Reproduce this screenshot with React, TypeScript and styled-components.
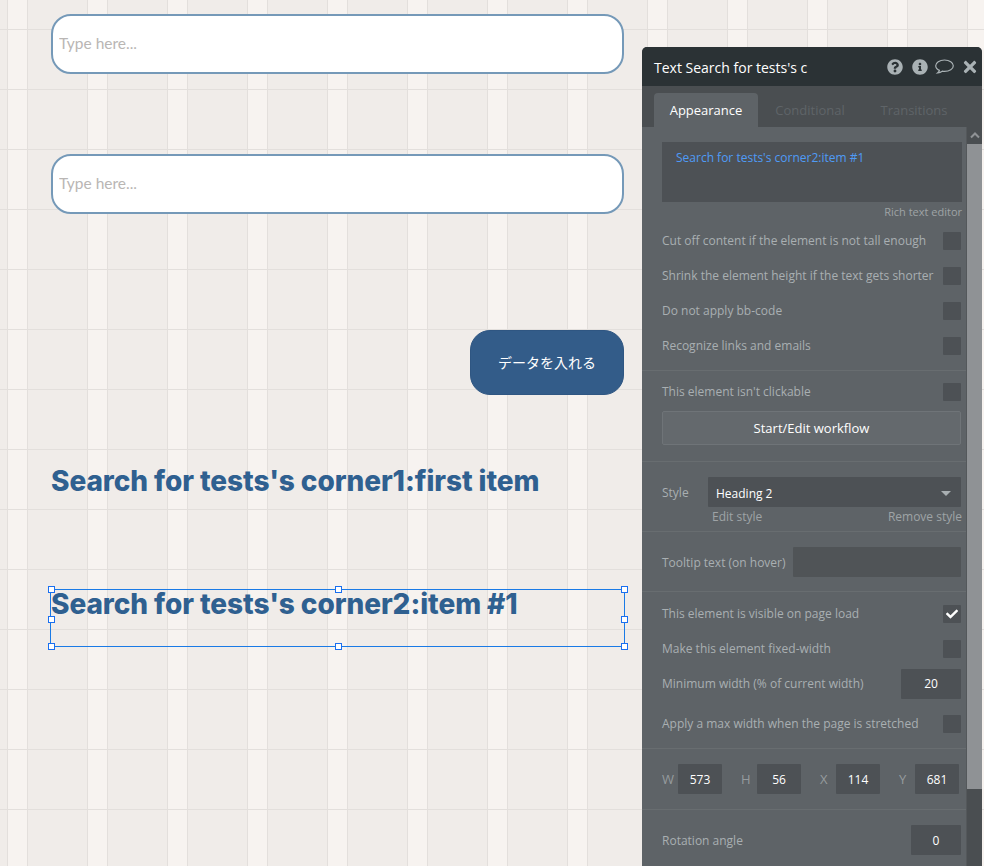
import React from "react";
import styled, { createGlobalStyle } from "styled-components";
import { FaCheck, FaInfoCircle, FaQuestionCircle, FaTimes } from "react-icons/fa";

const GlobalStyle = createGlobalStyle`
  html, body {
    margin: 0;
    padding: 0;
    height: 100%;
    overflow: hidden;
  }
  * {
    box-sizing: border-box;
  }
`;

const Canvas = styled.div`
  position: relative;
  width: 100%;
  height: 100vh;
  overflow: hidden;
  background-color: #f0ecE9;
  background-image: linear-gradient(to bottom, #e3dfdc 1px, transparent 1px),
    linear-gradient(
      to right,
      #e3dfdc 1px,
      #f7f3f0 1px,
      #f7f3f0 20px,
      #e3dfdc 20px,
      #e3dfdc 21px,
      transparent 21px
    );
  background-size: 100% 60px, 80px 100%;
  background-position: 0 29px, 7px 0;
`;

const Page = styled.div`
  display: flex;
  flex-direction: column;
  width: 573px;
  margin-left: 51px;
  padding-top: 14px;
`;

const SearchInput = styled.input<{ $top: number }>`
  width: 100%;
  height: 60px;
  margin-top: ${(p) => p.$top}px;
  padding: 0 8px 3px 6px;
  border: 2px solid #7599b8;
  border-radius: 20px;
  background: #fff;
  font-family: Lato, sans-serif;
  font-size: 15.5px;
  &::placeholder {
    color: #b9b6b4;
    opacity: 1;
  }
`;

const SubmitButton = styled.button`
  align-self: flex-end;
  width: 154px;
  height: 65px;
  margin-top: 116px;
  padding: 0 0 2px;
  border: 1px solid #2f5682;
  border-radius: 20px;
  background: #335c89;
  color: #fff;
  font-family: "Open Sans", "Noto Sans CJK JP", sans-serif;
  font-size: 14px;
`;

const Heading = styled.h2`
  margin: 68px 0 0;
  height: 36px;
  color: #2f6090;
  font-family: Inter, sans-serif;
  font-size: 28px;
  font-weight: 800;
  letter-spacing: -0.07px;
  line-height: 36px;
  white-space: nowrap;
`;

const SelectedBox = styled.div`
  position: relative;
  width: 575px;
  height: 58px;
  margin: 90px 0 0 -1px;
  border: 1px solid #1a7ae6;
`;

const SelectedHeading = styled(Heading)`
  margin: 0;
  height: 28px;
  line-height: 28px;
`;

const Handle = styled.span<{ $x: number; $y: number }>`
  position: absolute;
  left: ${(p) => p.$x}%;
  top: ${(p) => p.$y}%;
  width: 7px;
  height: 7px;
  margin: -3px 0 0 -3px;
  border: 1px solid #1a6ff0;
  background: #fff;
`;

const Panel = styled.aside`
  position: absolute;
  left: 642px;
  top: 47px;
  bottom: 0;
  width: 340px;
  display: flex;
  flex-direction: column;
  overflow: hidden;
  border-radius: 5px 5px 0 0;
  background: #5e6367;
  font-family: "Open Sans", sans-serif;
  font-size: 12px;
  color: #a9afb2;
`;

const PanelHeader = styled.header`
  display: flex;
  align-items: center;
  flex: none;
  height: 39px;
  padding: 0 3px 0 12px;
  background: #2b3235;
`;

const PanelTitle = styled.div`
  flex: 1;
  padding-top: 2px;
  color: #fff;
  font-size: 14px;
`;

const HeaderIcons = styled.div`
  display: flex;
  align-items: center;
  gap: 7px;
  color: #a9b1b4;
  font-size: 16px;
  svg {
    display: block;
  }
`;

const InfoIcon = styled(FaInfoCircle)`
  margin-left: 2px;
`;

const CommentIcon = styled.svg`
  width: 19px;
  height: 15px;
`;

const CloseIcon = styled(FaTimes)`
  font-size: 18px;
`;

const TabBar = styled.nav`
  display: flex;
  flex: none;
  height: 41px;
  padding: 7px 0 0 12px;
  background: #4a4e51;
`;

const Tab = styled.div<{ $active?: boolean }>`
  width: 104px;
  height: 34px;
  border-radius: 4px 4px 0 0;
  background: ${(p) => (p.$active ? "#5e6367" : "transparent")};
  color: ${(p) => (p.$active ? "#fff" : "#5f6468")};
  font-size: 13px;
  line-height: 34px;
  text-align: center;
`;

const PanelBody = styled.div`
  display: flex;
  flex: 1;
  min-height: 0;
`;

const Content = styled.div`
  width: 324px;
  flex: none;
`;

const Scrollbar = styled.div`
  display: flex;
  flex-direction: column;
  width: 16px;
  flex: none;
  background: #4a4e51;
  border-left: 1px solid #54585b;
`;

const ScrollUp = styled.div`
  display: flex;
  align-items: center;
  justify-content: center;
  height: 17px;
  svg {
    display: block;
  }
`;

const ScrollThumb = styled.div`
  height: 645px;
  background: #8f9295;
`;

const Section = styled.section<{ $top: number; $bottom: number; $last?: boolean }>`
  padding: ${(p) => p.$top}px 5px ${(p) => p.$bottom}px 20px;
  border-bottom: ${(p) => (p.$last ? "none" : "1px solid #686d70")};
`;

const EditorBox = styled.div`
  width: 300px;
  height: 60px;
  padding: 7px 14px;
  background: #4d5155;
  color: #4f9bf5;
  line-height: 17px;
`;

const SmallLink = styled.div`
  width: 300px;
  margin-top: 2px;
  height: 19px;
  color: #9ea3a6;
  font-size: 11px;
  line-height: 16px;
  text-align: right;
`;

const Row = styled.div<{ $height?: number }>`
  display: flex;
  align-items: center;
  justify-content: space-between;
  height: ${(p) => p.$height ?? 35}px;
`;

const Check = styled.div`
  display: flex;
  align-items: center;
  justify-content: center;
  width: 18px;
  height: 18px;
  border-radius: 1px;
  background: #4d5155;
  color: #fff;
  font-size: 12px;
`;

const WorkflowButton = styled.button`
  display: block;
  width: 299px;
  height: 34px;
  margin-top: 2px;
  border: 1px solid #6f7478;
  border-radius: 2px;
  background: #64696d;
  color: #fff;
  font-family: inherit;
  font-size: 13px;
`;

const StyleRow = styled.div`
  display: flex;
  align-items: center;
`;

const StyleLabel = styled.div`
  width: 46px;
  flex: none;
`;

const Dropdown = styled.div`
  display: flex;
  align-items: center;
  justify-content: space-between;
  width: 254px;
  height: 30px;
  padding: 2px 10px 0 8px;
  border-radius: 1px;
  background: #4d5155;
  color: #fff;
`;

const Caret = styled.span`
  width: 0;
  height: 0;
  border-left: 5px solid transparent;
  border-right: 5px solid transparent;
  border-top: 5px solid #a9afb2;
`;

const StyleLinks = styled.div`
  display: flex;
  justify-content: space-between;
  width: 254px;
  margin: 1px 0 0 46px;
  padding-left: 4px;
  color: #9ea3a6;
  font-size: 12px;
  line-height: 18px;
`;

const FieldInput = styled.input<{ $width: number }>`
  width: ${(p) => p.$width}px;
  height: 30px;
  padding: 0;
  border: none;
  border-radius: 1px;
  background: #4d5155;
  color: #fff;
  font-family: inherit;
  font-size: 12px;
  text-align: center;
`;

const TooltipInput = styled(FieldInput)`
  background: #505457;
`;

const Sizes = styled.div`
  display: flex;
  gap: 19px;
`;

const SizePair = styled.label`
  display: flex;
  align-items: center;
  width: 60px;
`;

const SizeLabel = styled.span`
  width: 16px;
  flex: none;
  color: #969b9e;
  font-size: 13px;
`;

const sizes = [
  ["W", "573"],
  ["H", "56"],
  ["X", "114"],
  ["Y", "681"],
];

const handles = [
  [0, -2],
  [50, -2],
  [100, -2],
  [0, 52],
  [100, 52],
  [0, 100],
  [50, 100],
  [100, 100],
];

const App: React.FC = () => {
  return (
    <Canvas>
      <GlobalStyle />
      <Page>
        <SearchInput $top={0} placeholder="Type here..." />
        <SearchInput $top={80} placeholder="Type here..." />
        <SubmitButton>データを入れる</SubmitButton>
        <Heading>Search for tests's corner1:first item</Heading>
        <SelectedBox>
          <SelectedHeading>Search for tests's corner2:item #1</SelectedHeading>
          {handles.map(([x, y]) => (
            <Handle key={`${x}-${y}`} $x={x} $y={y} />
          ))}
        </SelectedBox>
      </Page>

      <Panel>
        <PanelHeader>
          <PanelTitle>Text Search for tests's c</PanelTitle>
          <HeaderIcons>
            <FaQuestionCircle />
            <InfoIcon />
            <CommentIcon viewBox="0 0 19 15">
              <path
                d="M9.5 1C4.5 1 .7 3.6 .7 6.8C.7 8.8 2.2 10.4 4.4 11.4C4.2 12.4 3.6 13.2 2.8 13.8C4.6 13.6 6.2 12.9 7.3 12.2C8 12.4 8.8 12.4 9.5 12.4C14.5 12.4 18.3 10 18.3 6.8C18.3 3.6 14.5 1 9.5 1Z"
                fill="none"
                stroke="currentColor"
                strokeWidth="1.2"
              />
            </CommentIcon>
            <CloseIcon />
          </HeaderIcons>
        </PanelHeader>
        <TabBar>
          <Tab $active>Appearance</Tab>
          <Tab>Conditional</Tab>
          <Tab>Transitions</Tab>
        </TabBar>
        <PanelBody>
          <Content>
            <Section $top={15} $bottom={7}>
              <EditorBox>Search for tests's corner2:item #1</EditorBox>
              <SmallLink>Rich text editor</SmallLink>
              <Row>
                Cut off content if the element is not tall enough
                <Check />
              </Row>
              <Row>
                Shrink the element height if the text gets shorter
                <Check />
              </Row>
              <Row>
                Do not apply bb-code
                <Check />
              </Row>
              <Row>
                Recognize links and emails
                <Check />
              </Row>
            </Section>
            <Section $top={3} $bottom={16}>
              <Row>
                This element isn't clickable
                <Check />
              </Row>
              <WorkflowButton>Start/Edit workflow</WorkflowButton>
            </Section>
            <Section $top={15} $bottom={5}>
              <StyleRow>
                <StyleLabel>Style</StyleLabel>
                <Dropdown>
                  Heading 2
                  <Caret />
                </Dropdown>
              </StyleRow>
              <StyleLinks>
                <span>Edit style</span>
                <span>Remove style</span>
              </StyleLinks>
            </Section>
            <Section $top={15} $bottom={14}>
              <Row $height={30}>
                Tooltip text (on hover)
                <TooltipInput $width={168} readOnly />
              </Row>
            </Section>
            <Section $top={4} $bottom={2}>
              <Row>
                This element is visible on page load
                <Check>
                  <FaCheck />
                </Check>
              </Row>
              <Row>
                Make this element fixed-width
                <Check />
              </Row>
              <Row>
                Minimum width (% of current width)
                <FieldInput $width={60} defaultValue="20" readOnly />
              </Row>
              <Row $height={45}>
                Apply a max width when the page is stretched
                <Check />
              </Row>
            </Section>
            <Section $top={15} $bottom={15}>
              <Sizes>
                {sizes.map(([label, value]) => (
                  <SizePair key={label}>
                    <SizeLabel>{label}</SizeLabel>
                    <FieldInput $width={44} defaultValue={value} readOnly />
                  </SizePair>
                ))}
              </Sizes>
            </Section>
            <Section $top={15} $bottom={15} $last>
              <Row $height={30}>
                Rotation angle
                <FieldInput $width={50} defaultValue="0" readOnly />
              </Row>
            </Section>
          </Content>
          <Scrollbar>
            <ScrollUp>
              <svg width="10" height="7" viewBox="0 0 10 7">
                <path d="M1 5.5 L5 1.5 L9 5.5" fill="none" stroke="#8f9295" strokeWidth="2" />
              </svg>
            </ScrollUp>
            <ScrollThumb />
          </Scrollbar>
        </PanelBody>
      </Panel>
    </Canvas>
  );
};

export default App;
